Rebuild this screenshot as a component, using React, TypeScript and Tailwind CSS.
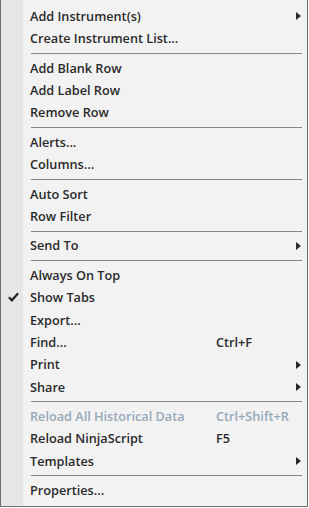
import React from "react";

type Item =
  | { sep: true }
  | { label: string; shortcut?: string; sub?: boolean; checked?: boolean; disabled?: boolean };

const items: Item[] = [
  { label: "Add Instrument(s)", sub: true },
  { label: "Create Instrument List..." },
  { sep: true },
  { label: "Add Blank Row" },
  { label: "Add Label Row" },
  { label: "Remove Row" },
  { sep: true },
  { label: "Alerts..." },
  { label: "Columns..." },
  { sep: true },
  { label: "Auto Sort" },
  { label: "Row Filter" },
  { sep: true },
  { label: "Send To", sub: true },
  { sep: true },
  { label: "Always On Top" },
  { label: "Show Tabs", checked: true },
  { label: "Export..." },
  { label: "Find...", shortcut: "Ctrl+F" },
  { label: "Print", sub: true },
  { label: "Share", sub: true },
  { sep: true },
  { label: "Reload All Historical Data", shortcut: "Ctrl+Shift+R", disabled: true },
  { label: "Reload NinjaScript", shortcut: "F5" },
  { label: "Templates", sub: true },
  { sep: true },
  { label: "Properties..." },
];

function Arrow() {
  return (
    <svg width="5" height="8" viewBox="0 0 5 8" className="block">
      <path d="M0 0 L5 4 L0 8 Z" fill="#2a2a2a" />
    </svg>
  );
}

function Check() {
  return (
    <svg width="11" height="10" viewBox="0 0 11 10" className="block">
      <path d="M0.9 5.2 L3.9 8.3 L10.1 1.3" fill="none" stroke="#222" strokeWidth="2.2" />
    </svg>
  );
}

export default function App() {
  return (
    <div
      className="relative w-[308px] h-[507px] bg-[#f2f2f2] border-l border-r border-b border-[#6e6e6e] flex"
      style={{ fontFamily: '"Open Sans", "Noto Sans", sans-serif' }}
    >
      <div className="w-[22px] shrink-0 bg-[#e6e6e6]" />
      <div className="flex-1 flex flex-col pt-[5px]">
        {items.map((it, i) =>
          "sep" in it ? (
            <div key={i} className="h-[7px] flex items-center pl-[8px] pr-[5px]">
              <div className="h-px w-full bg-[#868686]" />
            </div>
          ) : (
            <div
              key={i}
              className={`h-[22.4px] flex items-center text-[12.7px] font-semibold leading-none ${
                it.disabled ? "text-[#97a8b8]" : "text-[#2a2a2a]"
              }`}
            >
              <div className="w-[7px] relative h-full">
                {it.checked && (
                  <div className="absolute left-[-15px] top-1/2 -translate-y-1/2">
                    <Check />
                  </div>
                )}
              </div>
              <div className="w-[186px] whitespace-nowrap">{it.label}</div>
              <div className="w-[80px] whitespace-nowrap">{it.shortcut ?? ""}</div>
              <div className="w-[10px] flex items-center">{it.sub && <Arrow />}</div>
            </div>
          )
        )}
      </div>
    </div>
  );
}
